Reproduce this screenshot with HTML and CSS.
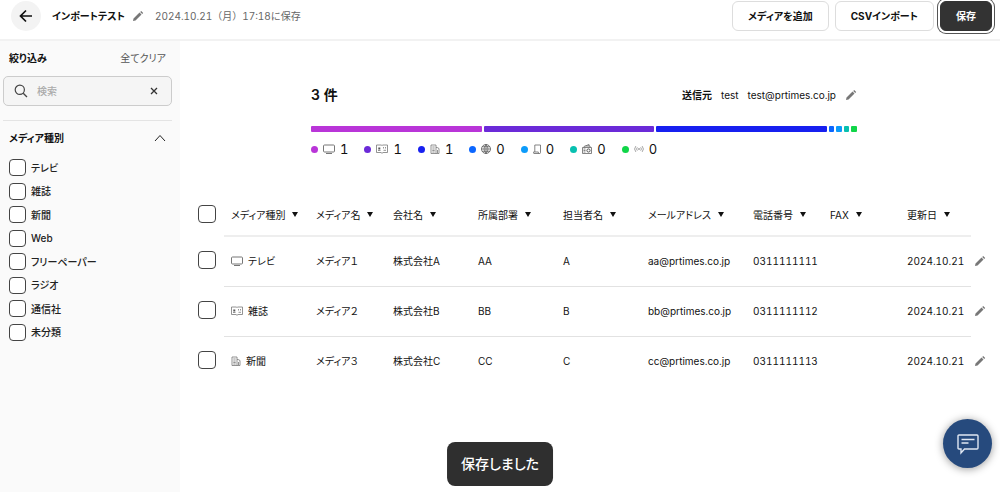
FILE: index.html
```html
<!DOCTYPE html>
<html lang="ja">
<head>
<meta charset="utf-8">
<meta name="viewport" content="width=device-width, initial-scale=1">
<title>インポートテスト</title>
<link rel="stylesheet" href="styles.css">
</head>
<body>
<svg class="sprite" aria-hidden="true">
  <symbol id="pencil" viewBox="0 0 12 12"><path d="M1 11l.5-2.4 6-6 2 2-6 6zM8.2 1.9l1-1 2 2-1 1z" fill="#777"/></symbol>
  <symbol id="tv" viewBox="0 0 12 12"><path d="M1.5 2h9q1 0 1 1v5q0 1-1 1h-9q-1 0-1-1V3q0-1 1-1zM3 10.5h6" fill="none" stroke="#777"/></symbol>
  <symbol id="magazine" viewBox="0 0 12 12"><path d="M.5 2h4.700l.8.6.8-.6h4.700v7.500H7l-1 .8-1-.8H.5z" fill="none" stroke="#777" stroke-width=".8"/><path d="M2 7.500h2.500M7.500 4v1.500M9.500 4v1.500M7.500 7.300H10" stroke="#777" stroke-width=".8"/><path d="M2.300 4.500h2v2h-2z" fill="#555"/></symbol>
  <symbol id="newspaper" viewBox="0 0 9 12"><path d="M.5 2h5v8.500h-5zM5.500 4.500h1.200l1.800 1v5h-3M1.800 4h2.400M1.800 6h2.400M1.800 7.500h2.400M1.800 9h2.400M7 7v3" fill="none" stroke="#777" stroke-width=".8"/></symbol>
  <symbol id="globe" viewBox="0 0 10 12"><circle cx="5" cy="6" r="4.500" fill="none" stroke="#555" stroke-width=".8"/><path d="M.5 6h9M1.200 3.700h7.600M1.200 8.300h7.600M5 1.500v9M5 1.500q-4 4.500 0 9M5 1.500q4 4.500 0 9" fill="none" stroke="#555" stroke-width=".7"/></symbol>
  <symbol id="scroll" viewBox="0 0 8 12"><path d="M1.800 9V2h5.700v7.500q0 1-1 1H1q-.6 0-.6-1V9h5v.7q.2.800 1 .8" fill="none" stroke="#666" stroke-width=".8"/></symbol>
  <symbol id="radio" viewBox="0 0 10 12"><path d="M.5 4.500h9v6h-9zM2 4.500v-1l5-2M3.500 3h4.500v1.500M1.500 6h2M1.500 7.500h2M1.500 9h2M7 3V1.500" fill="none" stroke="#666" stroke-width=".8"/><circle cx="6.500" cy="7.500" r="1.600" fill="none" stroke="#555"/></symbol>
  <symbol id="signal" viewBox="0 0 12 12"><path d="M2.200 2.500q-3 3.500 0 7M4 4q-1.800 2 0 4M9.800 2.500q3 3.500 0 7M8 4q1.800 2 0 4" fill="none" stroke="#777" stroke-width=".8"/><circle cx="6" cy="6" r=".9" fill="#555"/></symbol>
</svg>

<header class="topbar">
  <button class="back" aria-label="戻る"><svg viewBox="0 0 14 14"><path d="M13 7H2M7 1.500L1.500 7 7 12.500" fill="none" stroke="#111" stroke-width="1.700"/></svg></button>
  <h1 class="title">インポートテスト</h1>
  <button class="edit" aria-label="名前を編集"><svg><use href="#pencil"/></svg></button>
  <span class="saved">2024.10.21（月）17:18に保存</span>
  <div class="actions">
    <button class="btn">メディアを追加</button>
    <button class="btn">CSVインポート</button>
    <button class="btn btn-primary">保存</button>
  </div>
</header>

<div class="layout">
  <aside class="sidebar">
    <div class="filter-head">
      <h2 class="label">絞り込み</h2>
      <button class="clear">全てクリア</button>
    </div>
    <div class="search">
      <svg class="search-icon" viewBox="0 0 14 14"><circle cx="5.800" cy="5.800" r="4.600" fill="none" stroke="#444" stroke-width="1.200"/><path d="M9.200 9.200L13 13" stroke="#444" stroke-width="1.300"/></svg>
      <input class="search-input" type="text" placeholder="検索" aria-label="検索">
      <button class="search-clear" aria-label="クリア"><svg viewBox="0 0 8 8"><path d="M1 1l6 6M7 1L1 7" stroke="#333" stroke-width="1.300"/></svg></button>
    </div>
    <section class="facet">
      <button class="facet-head">メディア種別<svg viewBox="0 0 12 8"><path d="M1 7l5-5.500L11 7" fill="none" stroke="#222"/></svg></button>
      <ul class="facet-list">
        <li><label><input class="check" type="checkbox">テレビ</label></li>
        <li><label><input class="check" type="checkbox">雑誌</label></li>
        <li><label><input class="check" type="checkbox">新聞</label></li>
        <li><label><input class="check" type="checkbox">Web</label></li>
        <li><label><input class="check" type="checkbox">フリーペーパー</label></li>
        <li><label><input class="check" type="checkbox">ラジオ</label></li>
        <li><label><input class="check" type="checkbox">通信社</label></li>
        <li><label><input class="check" type="checkbox">未分類</label></li>
      </ul>
    </section>
  </aside>

  <main class="main">
    <section class="summary">
      <div class="summary-head">
        <h2 class="count">3 件</h2>
        <div class="sender"><b>送信元</b><span>test</span><span>test@prtimes.co.jp</span><button class="edit" aria-label="送信元を編集"><svg><use href="#pencil"/></svg></button></div>
      </div>
      <div class="bar">
        <span class="seg full magenta"></span><span class="seg full purple"></span><span class="seg full indigo"></span>
        <span class="seg blue"></span><span class="seg sky"></span><span class="seg teal"></span><span class="seg green"></span>
      </div>
      <ul class="legend">
        <li><i class="dot magenta"></i><svg class="w12"><use href="#tv"/></svg>1</li>
        <li><i class="dot purple"></i><svg class="w12"><use href="#magazine"/></svg>1</li>
        <li><i class="dot indigo"></i><svg class="w10"><use href="#newspaper"/></svg>1</li>
        <li><i class="dot blue"></i><svg class="w10"><use href="#globe"/></svg>0</li>
        <li><i class="dot sky"></i><svg class="w8"><use href="#scroll"/></svg>0</li>
        <li><i class="dot teal"></i><svg class="w10"><use href="#radio"/></svg>0</li>
        <li><i class="dot green"></i><svg class="w10" viewBox="0 0 12 12"><use href="#signal"/></svg>0</li>
      </ul>
    </section>

    <table class="media">
      <colgroup>
        <col class="c-check"><col class="c-mid"><col class="c-short"><col class="c-mid"><col class="c-mid"><col class="c-mid"><col class="c-mail"><col class="c-short"><col class="c-short"><col class="c-date"><col class="c-edit">
      </colgroup>
      <thead>
        <tr>
          <th class="bare"><input class="check" type="checkbox" aria-label="すべて選択"></th>
          <th><button class="sort">メディア種別</button></th>
          <th><button class="sort">メディア名</button></th>
          <th><button class="sort">会社名</button></th>
          <th><button class="sort">所属部署</button></th>
          <th><button class="sort">担当者名</button></th>
          <th><button class="sort">メールアドレス</button></th>
          <th><button class="sort">電話番号</button></th>
          <th><button class="sort">FAX</button></th>
          <th><button class="sort">更新日</button></th>
          <td class="bare"></td>
        </tr>
      </thead>
      <tbody>
        <tr>
          <td class="bare"><input class="check" type="checkbox" aria-label="メディア１を選択"></td>
          <td><span class="kind"><svg class="w12"><use href="#tv"/></svg>テレビ</span></td>
          <td>メディア１</td><td>株式会社A</td><td>AA</td><td>A</td><td>aa@prtimes.co.jp</td><td>0311111111</td><td></td><td>2024.10.21</td>
          <td class="bare"><button class="edit" aria-label="編集"><svg><use href="#pencil"/></svg></button></td>
        </tr>
        <tr>
          <td class="bare"><input class="check" type="checkbox" aria-label="メディア２を選択"></td>
          <td><span class="kind"><svg class="w12"><use href="#magazine"/></svg>雑誌</span></td>
          <td>メディア２</td><td>株式会社B</td><td>BB</td><td>B</td><td>bb@prtimes.co.jp</td><td>0311111112</td><td></td><td>2024.10.21</td>
          <td class="bare"><button class="edit" aria-label="編集"><svg><use href="#pencil"/></svg></button></td>
        </tr>
        <tr>
          <td class="bare"><input class="check" type="checkbox" aria-label="メディア３を選択"></td>
          <td><span class="kind"><svg class="w10"><use href="#newspaper"/></svg>新聞</span></td>
          <td>メディア３</td><td>株式会社C</td><td>CC</td><td>C</td><td>cc@prtimes.co.jp</td><td>0311111113</td><td></td><td>2024.10.21</td>
          <td class="bare"><button class="edit" aria-label="編集"><svg><use href="#pencil"/></svg></button></td>
        </tr>
      </tbody>
    </table>
  </main>
</div>

<div class="toast" role="status">保存しました</div>
<button class="chat" aria-label="チャット"><svg viewBox="0 0 22 22"><path d="M2 2h18q1 0 1 1v12q0 1-1 1H7.500L4 20v-4H2q-1 0-1-1V3q0-1 1-1z" fill="none" stroke="#dfe7f2" stroke-width="1.400"/><path d="M4.500 6.500h13M4.500 10h7" stroke="#dfe7f2" stroke-width="1.400"/></svg></button>
</body>
</html>
```
FILE: styles.css
```css
* { box-sizing: border-box; }
body {
  margin: 0;
  min-height: 100vh;
  display: flex;
  flex-direction: column;
  background: #fff;
  color: #111;
  font: 500 10px/16px Inter, "Noto Sans CJK JP", sans-serif;
  font-feature-settings: "palt";
  font-variant-numeric: tabular-nums;
}
button, input { font: inherit; font-feature-settings: inherit; color: inherit; }
button { margin: 0; padding: 0; border: 0; background: none; white-space: nowrap; }
h1, h2, ul { margin: 0; padding: 0; }
ul { list-style: none; }
svg { display: block; flex: none; }
.sprite { position: absolute; width: 0; height: 0; }

.topbar {
  display: flex;
  align-items: center;
  padding: 1px 8px 8px 11px;
  border-bottom: 2px solid #f2f2f2;
}
.back { display: grid; place-items: center; width: 30px; height: 30px; border-radius: 50%; background: #f3f3f3; }
.back svg { width: 14px; height: 14px; }
.title { margin-left: 11px; font-size: 10px; font-weight: 700; }
.edit { display: block; }
.edit svg { width: 12px; height: 12px; }
.title + .edit { margin-left: 7px; }
.saved { margin-left: 11px; color: #666; font-weight: 400; font-feature-settings: normal; }
.actions { display: flex; gap: 6px; margin-left: auto; }
.btn { height: 30px; padding: 0 15px; border: 1px solid #ddd; border-radius: 6px; background: #fff; font-weight: 700; }
.btn-primary { border-color: #333; background: #333; color: #fff; box-shadow: 0 0 0 2px #fff, 0 0 0 3px #555; }

.layout { display: flex; flex: 1; }
.sidebar { flex: none; width: 180px; padding: 9px 8px 9px 3px; background: #fafafa; }
.filter-head { display: flex; justify-content: space-between; padding: 0 6px; }
.label { font-size: 10px; font-weight: 700; }
.clear { color: #555; font-weight: 400; }
.search { display: flex; align-items: center; height: 30px; margin-top: 10px; padding: 0 13px 0 10px; border: 1px solid #ccc; border-radius: 5px; background: #f5f5f5; }
.search-icon { width: 14px; height: 14px; }
.search-input { flex: 1; min-width: 0; padding: 0 0 0 9px; border: 0; background: none; outline: 0; }
.search-input::placeholder { color: #aaa; }
.search-clear svg { width: 8px; height: 8px; }
.facet { margin-top: 14px; padding: 9px 6px 0; border-top: 1px solid #e4e4e4; }
.facet-head { display: flex; align-items: center; justify-content: space-between; width: 100%; font-weight: 700; }
.facet-head svg { width: 12px; height: 8px; }
.facet-list { display: flex; flex-direction: column; justify-content: space-between; min-height: 182px; margin-top: 13px; }
.facet-list label { display: flex; align-items: center; gap: 5px; color: #222; }
.check { appearance: none; display: block; flex: none; width: 17px; height: 17px; margin: 0; border: 1px solid #444; border-radius: 4px; background: #fff; }

.main { flex: 1; min-width: 0; padding: 44px 12px 0 0; }
.summary { max-width: 546px; margin: 0 auto; }
.summary-head { display: flex; align-items: center; justify-content: space-between; }
.count { font-size: 14px; line-height: 20px; font-weight: 600; }
.sender { display: flex; align-items: center; gap: 9px; font-weight: 400; }
.bar { display: flex; gap: 2px; margin-top: 21px; }
.seg { flex: 1; height: 6px; border-radius: 1px; }
.full { flex: 31; }
.magenta { background: #b935d8; }
.purple { background: #6b2ad8; }
.indigo { background: #1720f0; }
.blue { background: #0b66ff; }
.sky { background: #0c9bfa; }
.teal { background: #07c0b0; }
.green { background: #10d548; }
.legend { display: flex; gap: 16px; margin-top: 9px; font-size: 13px; font-weight: 400; }
.legend li { display: flex; align-items: center; gap: 5px; }
.dot { width: 7px; height: 7px; border-radius: 50%; }
.w12 { width: 12px; height: 12px; }
.w10 { width: 10px; height: 12px; }
.w8 { width: 8px; height: 12px; }

.media { width: calc(100% - 18px); margin: 37px 0 0 18px; border-collapse: collapse; table-layout: fixed; }
.media th, .media td { height: 50px; padding: 0 0 0 7px; border-bottom: 1px solid #e2e2e2; text-align: left; font-weight: 400; white-space: nowrap; }
.media thead th, .media thead td { height: 42px; }
.media thead th { border-bottom: 2px solid #eee; }
.media .bare { padding: 0; border: 0; }
.media .bare .edit { margin-left: 3px; }
.media .check { width: 18px; height: 18px; }
.media tbody tr:last-child td { border: 0; }
.media .bare:first-child { padding-bottom: 3px; }
.c-check { width: 26px; }
.c-mid { width: 85px; }
.c-short { width: 77px; }
.c-mail { width: 105px; }
.c-date { width: 71px; }
.c-edit { width: 17px; }
.sort { display: flex; align-items: center; gap: 7px; }
.sort::after { content: ""; border: solid transparent; border-width: 5px 3px 0; border-top-color: #111; }
.kind { display: flex; align-items: center; gap: 5px; }

.toast { position: fixed; bottom: 6px; left: 50%; transform: translateX(-50%); padding: 14px; border-radius: 8px; background: #2f2f2f; color: #fff; font-size: 14px; white-space: nowrap; }
.chat { position: fixed; right: 8px; bottom: 24px; display: grid; place-items: center; width: 49px; height: 49px; border-radius: 50%; background: #264a7d; box-shadow: 0 1px 8px rgba(0, 0, 0, .4); }
.chat svg { width: 22px; height: 22px; }
```
